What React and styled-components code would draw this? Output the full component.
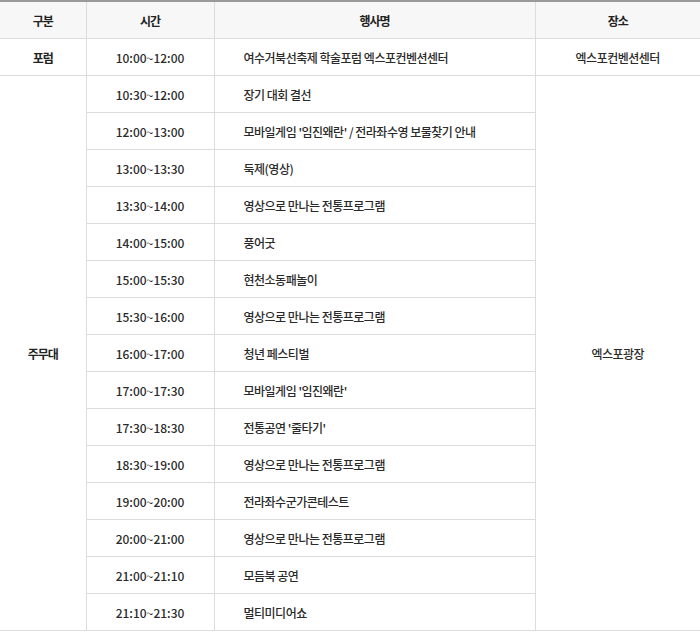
import styled, { createGlobalStyle } from "styled-components"

const GlobalStyle = createGlobalStyle`
    body{
        margin:0;
        background:#fff;
        font-family:"Noto Sans CJK KR","Noto Sans",sans-serif;
    }
`

const forum = { time: "10:00~12:00", title: "여수거북선축제 학술포럼 엑스포컨벤션센터", place: "엑스포컨벤션센터" }

const mainStage = [
    { time: "10:30~12:00", title: "장기 대회 결선" },
    { time: "12:00~13:00", title: "모바일게임 '임진왜란' / 전라좌수영 보물찾기 안내" },
    { time: "13:00~13:30", title: "둑제(영상)" },
    { time: "13:30~14:00", title: "영상으로 만나는 전통프로그램" },
    { time: "14:00~15:00", title: "풍어굿" },
    { time: "15:00~15:30", title: "현천소동패놀이" },
    { time: "15:30~16:00", title: "영상으로 만나는 전통프로그램" },
    { time: "16:00~17:00", title: "청년 페스티벌" },
    { time: "17:00~17:30", title: "모바일게임 '임진왜란'" },
    { time: "17:30~18:30", title: "전통공연 '줄타기'" },
    { time: "18:30~19:00", title: "영상으로 만나는 전통프로그램" },
    { time: "19:00~20:00", title: "전라좌수군가콘테스트" },
    { time: "20:00~21:00", title: "영상으로 만나는 전통프로그램" },
    { time: "21:00~21:10", title: "모듬북 공연" },
    { time: "21:10~21:30", title: "멀티미디어쇼" },
]

export default function App(){
    return (
        <>
            <GlobalStyle/>
            <Table>
                <colgroup>
                    <col style={{width:86}}/>
                    <col style={{width:128}}/>
                    <col style={{width:321}}/>
                    <col style={{width:165}}/>
                </colgroup>
                <thead>
                    <tr>
                        <Th>구분</Th>
                        <Th>시간</Th>
                        <Th>행사명</Th>
                        <Th $last>장소</Th>
                    </tr>
                </thead>
                <tbody>
                    <tr>
                        <Label>포럼</Label>
                        <Time>{forum.time}</Time>
                        <Td $left>{forum.title}</Td>
                        <Td $last>{forum.place}</Td>
                    </tr>
                    {mainStage.map((row,idx)=>(
                        <tr key={idx}>
                            {idx===0 ? <Label rowSpan={mainStage.length}>주무대</Label> : null}
                            <Time>{row.time}</Time>
                            <Td $left>{row.title}</Td>
                            {idx===0 ? <Td $last rowSpan={mainStage.length}>엑스포광장</Td> : null}
                        </tr>
                    ))}
                </tbody>
            </Table>
        </>
    )
}

const Table=styled.table`
    width:700px;
    table-layout:fixed;
    border-collapse:collapse;
    border-top:2px solid #9a9a9a;
    font-size:12px;
    color:#2a2a2a;
`
const Th=styled.th`
    height:36px;
    padding:0;
    background:#f7f7f7;
    font-weight:700;
    letter-spacing:-1px;
    color:#222;
    text-align:center;
    border-bottom:1px solid #dcdcdc;
    border-right:${p=>p.$last?"none":"1px solid #dcdcdc"};
`
const Td=styled.td`
    height:36px;
    padding:0 0 0 ${p=>p.$left?"29px":"0"};
    font-weight:500;
    letter-spacing:-0.5px;
    text-align:${p=>p.$left?"left":"center"};
    border-bottom:1px solid #dcdcdc;
    border-right:${p=>p.$last?"none":"1px solid #dcdcdc"};
`
const Time=styled(Td)`
    letter-spacing:0;
`
const Label=styled(Td)`
    font-weight:700;
    letter-spacing:-1px;
    color:#222;
`
